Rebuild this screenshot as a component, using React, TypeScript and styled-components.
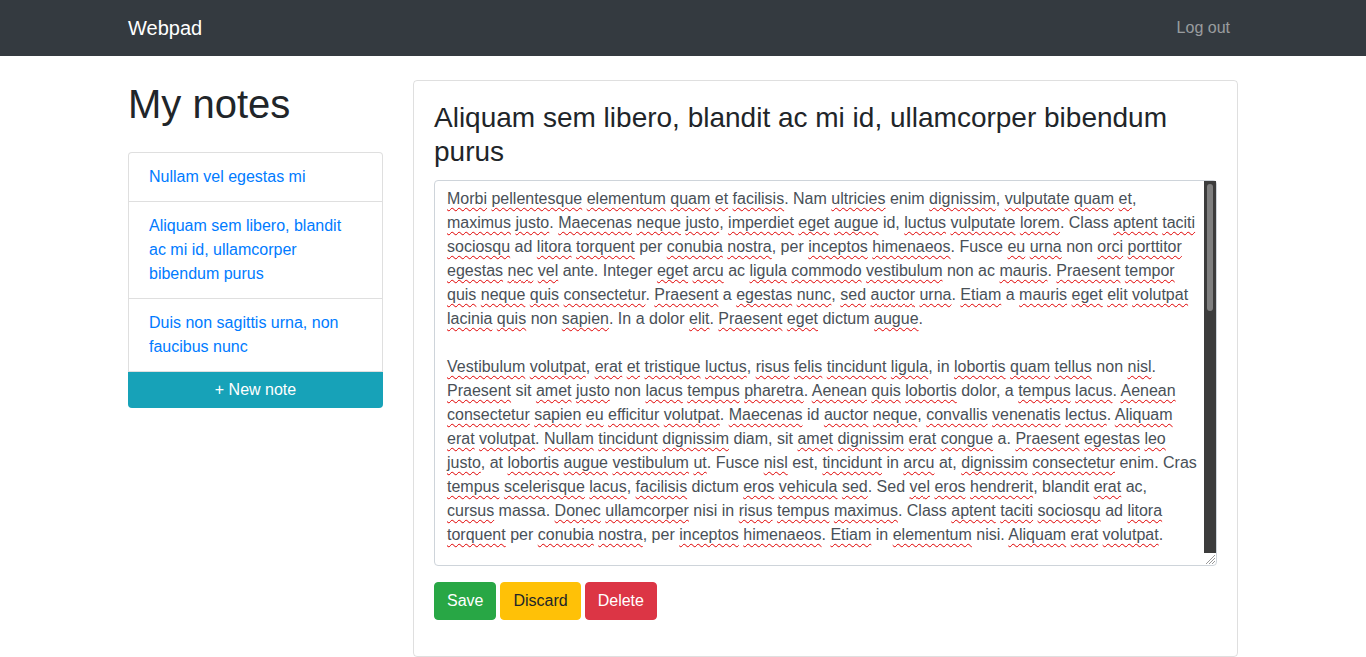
import React from "react";
import styled, { createGlobalStyle } from "styled-components";

const Global = createGlobalStyle`
  * { box-sizing: border-box; }
  html, body { margin: 0; padding: 0; background: #fff; }
  body {
    font-family: "Liberation Sans", Arial, sans-serif;
    font-size: 16px;
    line-height: 1.5;
    color: #212529;
  }
`;

const Navbar = styled.nav`
  background: #343a40;
  height: 56px;
  display: flex;
  align-items: center;
`;

const Container = styled.div`
  width: 100%;
  max-width: 1140px;
  margin: 0 auto;
  padding: 0 15px;
`;

const NavInner = styled(Container)`
  display: flex;
  align-items: center;
  justify-content: space-between;
`;

const Brand = styled.a`
  font-size: 20px;
  line-height: 30px;
  padding: 5px 0;
  color: #fff;
  text-decoration: none;
`;

const NavLink = styled.a`
  color: rgba(255, 255, 255, 0.5);
  padding: 8px;
  text-decoration: none;
`;

const Row = styled.div`
  display: grid;
  grid-template-columns: 255px 825px;
  column-gap: 30px;
  margin-top: 24px;
  align-items: start;
`;

const Heading = styled.h1`
  margin: 0 0 24px;
  font-size: 40px;
  font-weight: 500;
  line-height: 48px;
`;

const List = styled.div`
  display: flex;
  flex-direction: column;
`;

const ListItem = styled.a<{ first?: boolean }>`
  display: block;
  padding: 12px 20px;
  border: 1px solid rgba(0, 0, 0, 0.125);
  margin-bottom: -1px;
  color: #007bff;
  text-decoration: none;
  background: #fff;
  border-radius: ${(p) => (p.first ? "4px 4px 0 0" : "0")};
`;

const NewButton = styled.button`
  position: relative;
  margin-top: 1px;
  display: block;
  width: 100%;
  border: 0;
  border-radius: 0 0 4px 4px;
  background: #17a2b8;
  color: #fff;
  font-family: inherit;
  font-size: 16px;
  line-height: 24px;
  padding: 6px 12px;
`;

const Card = styled.div`
  border: 1px solid rgba(0, 0, 0, 0.125);
  border-radius: 4px;
  padding: 20px;
`;

const Title = styled.h3`
  margin: 0 0 12px;
  font-size: 28px;
  font-weight: 500;
  line-height: 1.2;
`;

const EditorBox = styled.div`
  position: relative;
  display: flex;
  height: 386px;
  border: 1px solid #ced4da;
  border-radius: 4px;
  margin-bottom: 16px;
  color: #495057;
`;

const TextPane = styled.div`
  flex: 1;
  min-width: 0;
  padding: 6px 12px;
  overflow: hidden;
`;

const ScrollRail = styled.div`
  width: 12px;
  margin-bottom: 12px;
  background: #3c3c3c;
  padding: 3px 3px;
`;

const Thumb = styled.div`
  height: 127px;
  border-radius: 3px;
  background: #7f7f7f;
`;

const Grip = styled.svg`
  position: absolute;
  right: 1px;
  bottom: 1px;
  width: 10px;
  height: 10px;
`;

const Para = styled.div`
  margin-bottom: 24px;
`;

const Line = styled.div`
  white-space: nowrap;
`;

const Miss = styled.span`
  text-decoration: underline wavy #e00000;
  text-decoration-thickness: 1px;
  text-underline-offset: 3px;
  text-decoration-skip-ink: none;
`;

const Actions = styled.div`
  display: flex;
  gap: 4px;
  margin-bottom: 16px;
`;

const Btn = styled.button<{ bg: string; fg: string }>`
  background: ${(p) => p.bg};
  color: ${(p) => p.fg};
  border: 1px solid ${(p) => p.bg};
  border-radius: 4px;
  padding: 6px 12px;
  font-family: inherit;
  font-size: 16px;
  line-height: 24px;
`;

const OK = new Set([
  "Nam", "enim", "id", "Class", "ad", "per", "Fusce", "non", "ante", "Integer",
  "ac", "a", "In", "dolor", "dictum", "in", "sit", "diam", "at", "est", "Cras",
  "Sed", "blandit", "massa", "nisi",
]);

function Spelled({ text }: { text: string }) {
  const parts = text.split(/([A-Za-z]+)/);
  return (
    <>
      {parts.map((p, i) =>
        /^[A-Za-z]+$/.test(p) && !OK.has(p) ? (
          <Miss key={i}>{p}</Miss>
        ) : (
          <React.Fragment key={i}>{p}</React.Fragment>
        )
      )}
    </>
  );
}

const P1 = [
  "Morbi pellentesque elementum quam et facilisis. Nam ultricies enim dignissim, vulputate quam et,",
  "maximus justo. Maecenas neque justo, imperdiet eget augue id, luctus vulputate lorem. Class aptent taciti",
  "sociosqu ad litora torquent per conubia nostra, per inceptos himenaeos. Fusce eu urna non orci porttitor",
  "egestas nec vel ante. Integer eget arcu ac ligula commodo vestibulum non ac mauris. Praesent tempor",
  "quis neque quis consectetur. Praesent a egestas nunc, sed auctor urna. Etiam a mauris eget elit volutpat",
  "lacinia quis non sapien. In a dolor elit. Praesent eget dictum augue.",
];

const P2 = [
  "Vestibulum volutpat, erat et tristique luctus, risus felis tincidunt ligula, in lobortis quam tellus non nisl.",
  "Praesent sit amet justo non lacus tempus pharetra. Aenean quis lobortis dolor, a tempus lacus. Aenean",
  "consectetur sapien eu efficitur volutpat. Maecenas id auctor neque, convallis venenatis lectus. Aliquam",
  "erat volutpat. Nullam tincidunt dignissim diam, sit amet dignissim erat congue a. Praesent egestas leo",
  "justo, at lobortis augue vestibulum ut. Fusce nisl est, tincidunt in arcu at, dignissim consectetur enim. Cras",
  "tempus scelerisque lacus, facilisis dictum eros vehicula sed. Sed vel eros hendrerit, blandit erat ac,",
  "cursus massa. Donec ullamcorper nisi in risus tempus maximus. Class aptent taciti sociosqu ad litora",
  "torquent per conubia nostra, per inceptos himenaeos. Etiam in elementum nisi. Aliquam erat volutpat.",
];

const paragraphs = [P1, P2];

export default function App() {
  return (
    <>
      <Global />
      <Navbar>
        <NavInner>
          <Brand href="#">Webpad</Brand>
          <NavLink href="#">Log out</NavLink>
        </NavInner>
      </Navbar>
      <Container>
        <Row>
          <div>
            <Heading>My notes</Heading>
            <List>
              <ListItem first href="#">Nullam vel egestas mi</ListItem>
              <ListItem href="#">Aliquam sem libero, blandit ac mi id, ullamcorper bibendum purus</ListItem>
              <ListItem href="#">Duis non sagittis urna, non faucibus nunc</ListItem>
              <NewButton>+ New note</NewButton>
            </List>
          </div>
          <Card>
            <Title>Aliquam sem libero, blandit ac mi id, ullamcorper bibendum purus</Title>
            <EditorBox>
              <TextPane>
                {paragraphs.map((p, i) => (
                  <Para key={i}>
                    {p.map((l, j) => (
                      <Line key={j}>
                        <Spelled text={l} />
                      </Line>
                    ))}
                  </Para>
                ))}
              </TextPane>
              <ScrollRail>
                <Thumb />
              </ScrollRail>
              <Grip viewBox="0 0 10 10">
                <g stroke="#9a9a9a" strokeWidth="1">
                  <line x1="1" y1="10" x2="10" y2="1" />
                  <line x1="4" y1="10" x2="10" y2="4" />
                  <line x1="7" y1="10" x2="10" y2="7" />
                </g>
              </Grip>
            </EditorBox>
            <Actions>
              <Btn bg="#28a745" fg="#fff">Save</Btn>
              <Btn bg="#ffc107" fg="#212529">Discard</Btn>
              <Btn bg="#dc3545" fg="#fff">Delete</Btn>
            </Actions>
          </Card>
        </Row>
      </Container>
    </>
  );
}
